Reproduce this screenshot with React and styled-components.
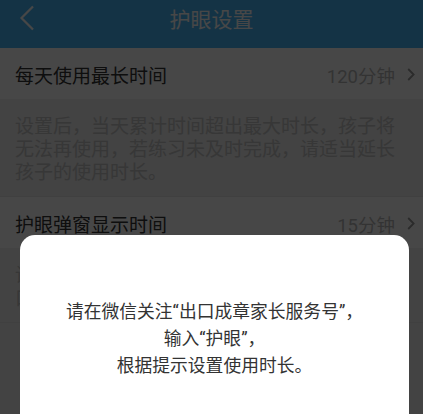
import styled, {createGlobalStyle} from "styled-components"

const Global = createGlobalStyle`
  html, body {
    margin: 0;
    padding: 0;
    background: #fff;
  }
  body {
    font-family: Roboto, "Noto Sans CJK SC", "Noto Sans", sans-serif;
  }
`

const Screen = styled.div`
  position: relative;
  width: 423px;
  height: 414px;
  overflow: hidden;
  background: #f0f0f0;
`

const NavBar = styled.header`
  height: 48px;
  box-sizing: border-box;
  padding: 0 0 12px;
  background: #4ab8f8;
  display: grid;
  grid-template-columns: 60px 1fr 60px;
  align-items: center;
`

const Back = styled.button`
  border: 0;
  background: none;
  padding: 0 0 0 19px;
  display: flex;
  align-items: center;
  height: 36px;
  color: #fff;
`

const Title = styled.h1`
  margin: 0;
  text-align: center;
  font-size: 21px;
  font-weight: 400;
  color: #fff;
`

const Row = styled.div`
  height: 51px;
  box-sizing: border-box;
  padding: 2px 8px 0 15px;
  background: #fff;
  display: flex;
  align-items: center;
`

const Label = styled.span`
  flex: 1;
  font-size: 19px;
  color: #333;
`

const Value = styled.span`
  font-size: 18.5px;
  color: #b8b8b8;
  margin-right: 12px;
`

const Hint = styled.p`
  margin: 0;
  padding: 16px 15px 12px;
  background: #f0f0f0;
  border-bottom: 1px solid #e4e4e4;
  font-size: 19px;
  line-height: 23px;
  color: #c4c4c4;
`

const Mask = styled.div`
  position: absolute;
  inset: 0;
  background: rgba(0, 0, 0, 0.72);
  display: flex;
  align-items: flex-start;
  padding: 235px 0 0 20px;
`

const Dialog = styled.div`
  width: 389px;
  height: 240px;
  box-sizing: border-box;
  padding: 63px 16px 0;
  background: #fff;
  border-radius: 15px;
  text-align: center;
  font-size: 17.8px;
  line-height: 27px;
  color: #333;
`

const Chevron = ({size = 13}) => (
  <svg width={size * 0.62} height={size} viewBox="0 0 8 13" fill="none">
    <path d="M1.2 1 L6.6 6.5 L1.2 12" stroke="#999" strokeWidth="1.8" />
  </svg>
)

const Setting = ({label, value, hint}) => (
  <>
    <Row>
      <Label>{label}</Label>
      <Value>{value}</Value>
      <Chevron />
    </Row>
    <Hint>{hint}</Hint>
  </>
)

export default function App() {
  return (
    <Screen>
      <Global />
      <NavBar>
        <Back>
          <svg width="16" height="26" viewBox="0 0 16 26" fill="none">
            <path d="M14 1.5 L2.5 13 L14 24.5" stroke="currentColor" strokeWidth="2.2" />
          </svg>
        </Back>
        <Title>护眼设置</Title>
        <span />
      </NavBar>
      <Setting
        label="每天使用最长时间"
        value="120分钟"
        hint="设置后，当天累计时间超出最大时长，孩子将无法再使用，若练习未及时完成，请适当延长孩子的使用时长。"
      />
      <Setting
        label="护眼弹窗显示时间"
        value="15分钟"
        hint="设置后，连续使用达到设定的时间将弹出窗口，孩子需休息后才能继续使用。"
      />
      <Mask>
        <Dialog>
          请在微信关注“出口成章家长服务号”，<br />
          输入“护眼”，<br />
          根据提示设置使用时长。
        </Dialog>
      </Mask>
    </Screen>
  )
}
